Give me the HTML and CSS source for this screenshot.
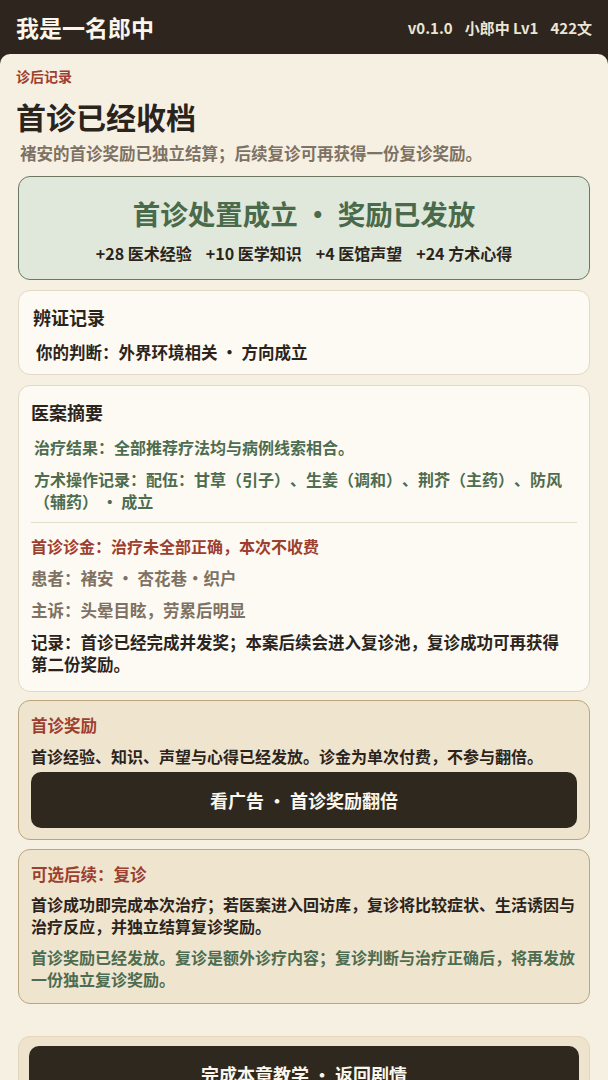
FILE: index.html
```html
<!DOCTYPE html>
<html lang="zh-CN">
<head>
    <meta charset="UTF-8">
    <meta name="viewport" content="width=device-width, initial-scale=1.0">
    <title>我是一名郎中</title>
    <link rel="stylesheet" href="styles.css">
</head>
<body>
    <header class="topbar">
        <div class="app-title">我是一名郎中</div>
        <div class="app-meta">
            <span>v0.1.0</span>
            <span>小郎中 Lv1</span>
            <span>422文</span>
        </div>
    </header>

    <main class="page">
        <div class="eyebrow">诊后记录</div>
        <h1 class="page-title">首诊已经收档</h1>
        <p class="page-sub">褚安的首诊奖励已独立结算；后续复诊可再获得一份复诊奖励。</p>

        <section class="card card-success">
            <div class="success-title">首诊处置成立 · 奖励已发放</div>
            <div class="reward-list">
                <span>+28 医术经验</span>
                <span>+10 医学知识</span>
                <span>+4 医馆声望</span>
                <span>+24 方术心得</span>
            </div>
        </section>

        <section class="card card-plain">
            <h2 class="card-title">辨证记录</h2>
            <p class="line indent">你的判断：外界环境相关 · 方向成立</p>
        </section>

        <section class="card card-summary">
            <h2 class="card-title">医案摘要</h2>
            <p class="line indent green">治疗结果：全部推荐疗法均与病例线索相合。</p>
            <p class="line indent green">方术操作记录：配伍：甘草（引子）、生姜（调和）、荆芥（主药）、防风（辅药） · 成立</p>
            <hr class="divider">
            <p class="line red small">首诊诊金：治疗未全部正确，本次不收费</p>
            <p class="line gray">患者：褚安 · 杏花巷・织户</p>
            <p class="line gray">主诉：头晕目眩，劳累后明显</p>
            <p class="line record">记录：首诊已经完成并发奖；本案后续会进入复诊池，复诊成功可再获得第二份奖励。</p>
        </section>

        <section class="card card-note card-bonus">
            <h2 class="card-title red">首诊奖励</h2>
            <p class="line small">首诊经验、知识、声望与心得已经发放。诊金为单次付费，不参与翻倍。</p>
            <button class="dark-button">看广告 · 首诊奖励翻倍</button>
        </section>

        <section class="card card-note card-follow">
            <h2 class="card-title red">可选后续：复诊</h2>
            <p class="line">首诊成功即完成本次治疗；若医案进入回访库，复诊将比较症状、生活诱因与治疗反应，并独立结算复诊奖励。</p>
            <p class="line green">首诊奖励已经发放。复诊是额外诊疗内容；复诊判断与治疗正确后，将再发放一份独立复诊奖励。</p>
        </section>

        <section class="card card-footer">
            <button class="dark-button">完成本章教学 · 返回剧情</button>
        </section>
    </main>
</body>
</html>
```

FILE: styles.css
```css
body {
    margin: 0;
    background-color: #f6f0e3;
    color: #2b241c;
    font-family: "Noto Sans CJK SC", "Noto Sans", sans-serif;
    font-weight: 700;
    text-spacing-trim: space-all;
}

/* Top bar */
.topbar {
    display: flex;
    align-items: center;
    justify-content: space-between;
    height: 64px;
    padding: 0 16px 10px;
    box-sizing: border-box;
    background-color: #2e261e;
    color: #fbf6ec;
}

.app-title {
    font-size: 23px;
}

.app-meta {
    display: flex;
    gap: 12px;
    font-size: 15px;
    color: #ece4d4;
}

/* Page */
.page {
    margin-top: -10px;
    padding: 10px 16px 40px;
    background-color: #f6f0e3;
    border-radius: 10px 10px 0 0;
}

.eyebrow {
    font-size: 14px;
    line-height: 24px;
    color: #9d3f2f;
}

.page-title {
    margin: 8px 0 0;
    font-size: 30px;
    line-height: 40px;
    font-weight: 700;
}

.page-sub {
    margin: 5px 0 11px 4px;
    font-size: 16.5px;
    line-height: 24px;
    color: #7d7264;
}

/* Cards */
.card {
    margin: 0 2px 10px;
    background-color: #fdfaf3;
    border: 1px solid #e2d8c3;
    border-radius: 12px;
}

.card-plain {
    padding: 12px 14px 11px;
}

.card-summary {
    margin-bottom: 8px;
    padding: 12px 12px 16px;
}

.card-title {
    margin: 0;
    font-size: 18px;
    line-height: 28px;
    font-weight: 700;
}

.line {
    margin: 10px 0 0;
    font-size: 16.5px;
    line-height: 22px;
}

.line.small {
    font-size: 16px;
}

.indent {
    padding-left: 3px;
}

.card-summary .indent {
    font-size: 16px;
}

.record {
    padding-right: 4px;
}

.green {
    color: #4e6c4f;
}

.red {
    color: #9d3f2f;
}

.gray {
    color: #7d7264;
}

.divider {
    margin: 10px 0 0;
    border: none;
    border-top: 1px solid #e4dccb;
}

.divider + .line {
    margin-top: 12px;
}

/* Success banner */
.card-success {
    padding: 14px;
    background-color: #dfe8da;
    border-color: #6a7862;
    text-align: center;
}

.success-title {
    font-size: 27.5px;
    line-height: 44px;
    color: #4a6a4c;
}

.reward-list {
    display: flex;
    justify-content: center;
    gap: 14px;
    margin-top: 6px;
    font-size: 16px;
    line-height: 24px;
}

/* Note cards */
.card-note {
    padding: 11px 12px 11px;
    background-color: #efe5cf;
    border-color: #bba57f;
}

.card-note .card-title {
    font-size: 16.5px;
    line-height: 26px;
}

.card-bonus {
    margin-bottom: 9px;
}

.card-bonus .line {
    margin-top: 7px;
}

.card-follow {
    padding-bottom: 13px;
}

.card-follow .line {
    margin-top: 6px;
    font-size: 16px;
}

.card-follow .line + .line {
    margin-top: 9px;
}

.dark-button {
    display: block;
    width: 100%;
    height: 56px;
    margin-top: 5px;
    border: none;
    border-radius: 10px;
    background-color: #2f281f;
    color: #fbf6ec;
    font-family: inherit;
    font-size: 18px;
    font-weight: 700;
    cursor: pointer;
}

.card-footer {
    margin-top: 32px;
    padding: 9px 10px;
    background-color: #eee3cc;
    border-color: #e3d6ba;
}

.card-footer .dark-button {
    margin-top: 0;
}
```
